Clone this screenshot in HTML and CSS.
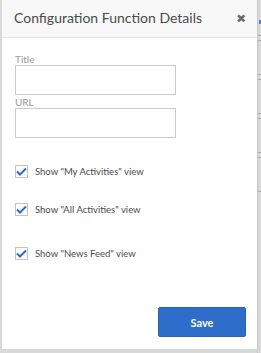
FILE: index.html
```html
<!DOCTYPE html>
<html>
<head>
<meta charset="utf-8">
<link rel="stylesheet" href="styles.css">
</head>
<body>
<div class="page">
  <div class="modal">
    <div class="header">
      <h1 class="title">Configuration Function Details</h1>
      <span class="close">&#x2715;</span>
    </div>
    <div class="content">
      <label class="field-label">Title</label>
      <div class="input"></div>
      <label class="field-label url">URL</label>
      <div class="input"></div>
      <div class="checks">
        <div class="check c1"><span class="box"><svg width="11" height="9" viewBox="0 0 11 9"><path d="M1 4.5 L4 7.5 L10 1.5" fill="none" stroke="#2d6dcb" stroke-width="2"/></svg></span><span class="check-text">Show "My Activities" view</span></div>
        <div class="check c2"><span class="box"><svg width="11" height="9" viewBox="0 0 11 9"><path d="M1 4.5 L4 7.5 L10 1.5" fill="none" stroke="#2d6dcb" stroke-width="2"/></svg></span><span class="check-text">Show "All Activities" view</span></div>
        <div class="check c3"><span class="box"><svg width="11" height="9" viewBox="0 0 11 9"><path d="M1 4.5 L4 7.5 L10 1.5" fill="none" stroke="#2d6dcb" stroke-width="2"/></svg></span><span class="check-text">Show "News Feed" view</span></div>
      </div>
      <div class="footer">
        <button class="save">Save</button>
      </div>
    </div>
  </div>
  <div class="side">
    <div class="mark"></div>
    <div class="line l1"></div>
    <div class="line l2"></div>
    <div class="line l3"></div>
    <div class="line l2"></div>
    <div class="line l3"></div>
    <div class="line l2"></div>
    <div class="line l3"></div>
    <div class="line l2"></div>
    <div class="line l3"></div>
  </div>
</div>
</body>
</html>
```
FILE: styles.css
```css
* { box-sizing: border-box; }
html, body { margin: 0; padding: 0; }
body {
  width: 261px;
  height: 353px;
  background: #d9d9d9;
  font-family: Lato, "Open Sans", "Liberation Sans", sans-serif;
  overflow: hidden;
}
.page {
  display: flex;
  height: 353px;
  padding-left: 2px;
}
.modal {
  width: 255px;
  height: 349px;
  background: #fff;
  display: flex;
  flex-direction: column;
}
.header {
  height: 38px;
  background: #f8f8f8;
  border-bottom: 1px solid #e6e6e6;
  display: flex;
  align-items: center;
  justify-content: space-between;
  padding: 0 12px 2px 12px;
}
.title {
  margin: 0;
  font-size: 14px;
  font-weight: 400;
  color: #4b4b4b;
}
.close {
  font-size: 10px;
  font-weight: 700;
  color: #6a6a6a;
  -webkit-text-stroke: 1px #6a6a6a;
}
.content {
  flex: 1;
  display: flex;
  flex-direction: column;
  padding: 15px 0 0 13px;
}
.field-label {
  font-size: 10px;
  color: #9a9a9a;
  line-height: 12px;
  height: 12px;
}
.url { margin-top: 1px; }
.input {
  width: 161px;
  height: 30px;
  border: 1px solid #cccccc;
}
.checks {
  display: flex;
  flex-direction: column;
}
.check {
  display: flex;
  align-items: center;
  height: 13px;
  line-height: 13px;
}
.c1 { margin-top: 27px; }
.c2 { margin-top: 25px; }
.c3 { margin-top: 31px; }
.box {
  width: 13px;
  height: 13px;
  border: 1px solid #c4c4c4;
  display: flex;
  align-items: center;
  justify-content: center;
  background: #fff;
}
.check-text {
  margin-left: 7px;
  font-size: 9.5px;
  color: #4b4b4b;
}
.footer {
  margin-top: auto;
  display: flex;
  justify-content: flex-end;
  padding: 0 11px 12px 0;
}
.save {
  width: 88px;
  height: 30px;
  background: #2f6dcb;
  border: 1px solid #2a63bb;
  border-radius: 2px;
  color: #fff;
  font-family: inherit;
  font-size: 11px;
  font-weight: 700;
}
.side {
  flex: 1;
  border-left: 1px solid #c8c8c8;
  display: flex;
  flex-direction: column;
}
.mark { height: 4px; width: 2px; margin-top: 20px; background: #5b7fc0; align-self: flex-end; }
.line { height: 1px; background: #a8a8a8; }
.l1 { margin-top: 11px; }
.l2 { margin-top: 4px; }
.l3 { margin-top: 33px; }
```
